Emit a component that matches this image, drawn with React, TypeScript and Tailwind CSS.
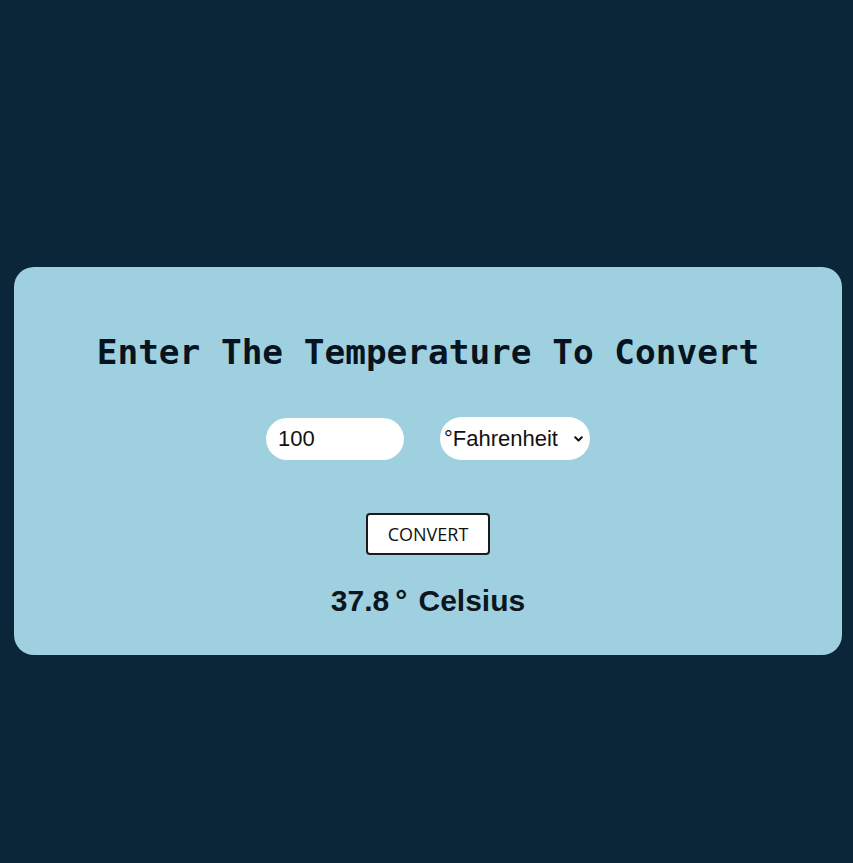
import { useState } from "react";

export default function App() {
  const [nilai, setNilai] = useState("100");
  const [satuan, setSatuan] = useState("F");

  return (
    <div className="min-h-[863px] bg-[#0b2639] pt-[267px]">
      <div className="ml-[14px] w-[828px] rounded-[20px] bg-[#9fd0df] pt-[65px] pb-[36px] flex flex-col items-center">
        <h1 className="text-[34.4px] leading-[40px] font-bold text-[#07131f] font-['DejaVu_Sans_Mono',monospace]">
          Enter The Temperature To Convert
        </h1>

        <div className="mt-[45px] flex items-center gap-[36px]">
          <input
            value={nilai}
            onChange={(e) => setNilai(e.target.value)}
            className="w-[138px] h-[42px] rounded-full bg-white pl-[12px] text-[22px] text-[#111] outline-none font-['Liberation_Sans',Arial,sans-serif]"
          />
          <div className="relative">
            <select
              value={satuan}
              onChange={(e) => setSatuan(e.target.value)}
              className="appearance-none w-[150px] h-[43px] rounded-full bg-white pl-[4px] text-[22px] text-[#111] outline-none font-['Liberation_Sans',Arial,sans-serif]"
            >
              <option value="F">°Fahrenheit</option>
              <option value="C">°Celsius</option>
            </select>
            <svg
              className="absolute right-[7px] top-[19px] pointer-events-none"
              width="9"
              height="6"
              viewBox="0 0 9 6"
              fill="none"
            >
              <path d="M1.2 1.2L4.5 4.5L7.8 1.2" stroke="#111" strokeWidth="2" strokeLinecap="round" strokeLinejoin="round" />
            </svg>
          </div>
        </div>

        <button className="mt-[53px] w-[124px] h-[42px] rounded-[4px] border-2 border-[#1b1b1b] bg-white text-[18px] text-[#111] font-['Open_Sans',sans-serif]">
          CONVERT
        </button>

        <p className="mt-[28px] text-[30px] leading-[36px] font-bold text-[#0d1620] font-['Liberation_Sans',Arial,sans-serif]">
          37.8<span className="ml-[6px]">°</span> <span className="ml-[3px]">Celsius</span>
        </p>
      </div>
    </div>
  );
}
